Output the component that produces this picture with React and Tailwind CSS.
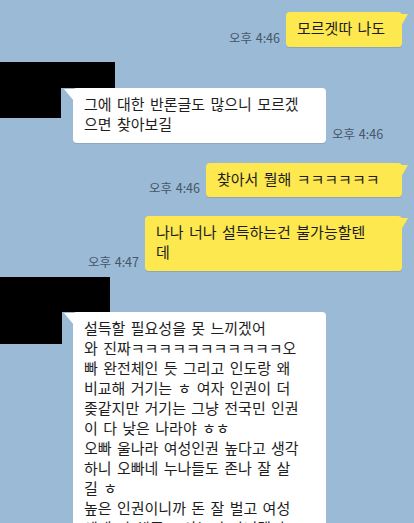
const FONT = "font-['Noto_Sans_CJK_KR','Noto_Sans',sans-serif]";

function Tail({ side, color }) {
  if (side === 'right') {
    return (
      <svg className="absolute right-[-6px] top-[2px]" width="7" height="12" viewBox="0 0 7 12">
        <polygon points="0,0 7,0 0,12" fill={color} />
      </svg>
    );
  }
  return (
    <svg className="absolute left-[-9px] top-[1px]" width="10" height="12" viewBox="0 0 10 12">
      <polygon points="10,0 0,0 10,12" fill={color} />
    </svg>
  );
}

function Time({ children }) {
  return (
    <div className="mb-[2px] whitespace-nowrap text-[12.5px] leading-[14px] text-[#46566a] [word-spacing:1px]">
      {children}
    </div>
  );
}

function Bubble({ mine, width, height, lines, pt = 'pt-[6px]', leading = 'leading-[19.5px]' }) {
  const color = mine ? '#fde84f' : '#ffffff';
  return (
    <div
      className={`relative shrink-0 rounded-[4px] pl-[11px] ${pt} ${leading} text-[15px] text-[#1e1e1e] [word-spacing:2px] shadow-[0_1px_0_rgba(0,0,0,0.1)] ${
        mine ? 'bg-[#fde84f]' : 'bg-white'
      }`}
      style={{ width, height }}
    >
      <Tail side={mine ? 'right' : 'left'} color={color} />
      {lines.map((l, i) => (
        <div key={i} className="whitespace-nowrap">
          {l}
        </div>
      ))}
    </div>
  );
}

function Mine({ time, className, ...b }) {
  return (
    <div className={`flex items-end justify-end gap-[6px] pr-[12px] ${className}`}>
      <Time>{time}</Time>
      <Bubble mine {...b} />
    </div>
  );
}

export default function App() {
  return (
    <div className={`h-[523px] w-[414px] overflow-hidden bg-[#9bbad5] pt-[12px] ${FONT}`}>
      <Mine time="오후 4:46" width={116} height={35} lines={['모르겟따 나도']} />

      {/* 상대방 메시지 (프로필/이름 가림) */}
      <div className="mt-[15px]">
        <div className="h-[26px] w-[115px] bg-black" />
        <div className="flex items-end">
          <div className="h-[30px] w-[61px] shrink-0 self-start bg-black" />
          <div className="ml-[12px]">
            <Bubble width={253} height={55} lines={['그에 대한 반론글도 많으니 모르겠', '으면 찾아보길']} />
          </div>
          <div className="ml-[6px]">
            <Time>오후 4:46</Time>
          </div>
        </div>
      </div>

      <Mine className="mt-[20px]" time="오후 4:46" width={196} height={34} lines={['찾아서 뭘해 ㅋㅋㅋㅋㅋㅋ']} />
      <Mine
        className="mt-[19px]"
        time="오후 4:47"
        width={257}
        height={55}
        lines={['나나 너나 설득하는건 불가능할텐', '데']}
      />

      <div className="mt-[6px]">
        <div className="h-[35px] w-[110px] bg-black" />
        <div className="flex items-start">
          <div className="h-[32px] w-[62px] shrink-0 bg-black" />
          <div className="ml-[11px]">
            <Bubble
              width={253}
              height={260}
              pt="pt-[6px]"
              leading="leading-[20px]"
              lines={[
                '설득할 필요성을 못 느끼겠어',
                '와 진짜ㅋㅋㅋㅋㅋㅋㅋㅋㅋㅋㅋ오',
                '빠 완전체인 듯 그리고 인도랑 왜',
                '비교해 거기는 ㅎ 여자 인권이 더',
                '좆같지만 거기는 그냥 전국민 인권',
                '이 다 낮은 나라야 ㅎㅎ',
                '오빠 울나라 여성인권 높다고 생각',
                '하니 오빠네 누나들도 존나 잘 살',
                '길 ㅎ',
                '높은 인권이니까 돈 잘 벌고 여성',
                '에게 다 해주고 사는거 아니겠어',
              ]}
            />
          </div>
        </div>
      </div>
    </div>
  );
}
